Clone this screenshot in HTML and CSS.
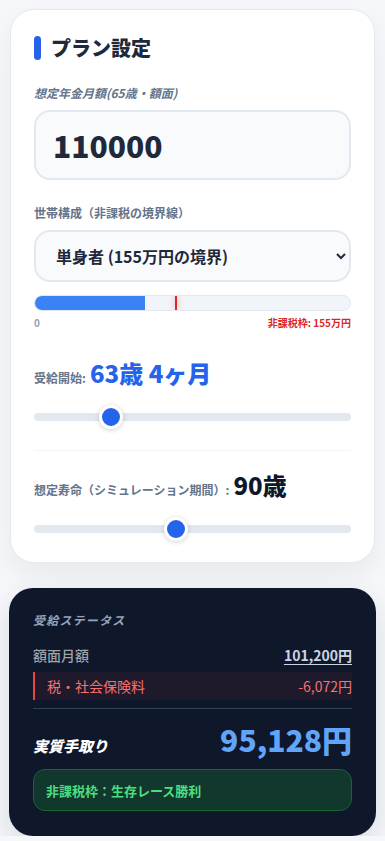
FILE: index.html
```html
<!DOCTYPE html>
<html lang="ja">
<head>
<meta charset="utf-8">
<meta name="viewport" content="width=device-width, initial-scale=1">
<title>プラン設定</title>
<link rel="stylesheet" href="styles.css">
</head>
<body>
<main class="page">
  <section class="card">
    <h2 class="card-title"><span class="title-bar"></span>プラン設定</h2>

    <label class="field-label italic" for="amount">想定年金月額(65歳・額面)</label>
    <input id="amount" class="amount-input" type="text" value="110000">

    <label class="field-label label-select" for="household">世帯構成（非課税の境界線）</label>
    <select id="household" class="household-select">
      <option>単身者 (155万円の境界)</option>
    </select>

    <div class="meter">
      <div class="meter-fill" style="width:35%"></div>
      <div class="meter-mark" style="left:44.5%"></div>
    </div>
    <div class="meter-scale">
      <span class="scale-min">0</span>
      <span class="scale-max">非課税枠: 155万円</span>
    </div>

    <div class="slider-block first">
      <div class="slider-head">
        <span class="head-label">受給開始:</span>
        <span class="head-value blue">63歳 4ヶ月</span>
      </div>
      <input class="range" type="range" min="720" max="900" value="760">
    </div>

    <div class="slider-block second">
      <div class="slider-head">
        <span class="head-label">想定寿命（シミュレーション期間）:</span>
        <span class="head-value dark">90歳</span>
      </div>
      <input class="range" type="range" min="70" max="115" value="90">
    </div>
  </section>

  <section class="status">
    <div class="status-title">受給ステータス</div>
    <div class="status-row">
      <span class="row-label">額面月額</span>
      <span class="row-value gross">101,200円</span>
    </div>
    <div class="status-row deduct">
      <span>税・社会保険料</span>
      <span>-6,072円</span>
    </div>
    <div class="net">
      <span class="net-label">実質手取り</span>
      <span class="net-value">95,128円</span>
    </div>
    <div class="badge">非課税枠：生存レース勝利</div>
  </section>
</main>
</body>
</html>
```
FILE: styles.css
```css
* { box-sizing: border-box; }
html, body { margin: 0; padding: 0; }
body {
  background: #f5f7fa;
  font-family: "Noto Sans CJK JP", "Noto Sans", sans-serif;
  color: #1e293b;
}
.page {
  padding: 9px 9px 0;
  display: flex;
  flex-direction: column;
}
.card {
  margin: 0 1px;
  background: #ffffff;
  border: 1px solid #e5e9f0;
  border-radius: 24px;
  padding: 24px 23px 21px;
  box-shadow: 0 12px 30px rgba(15, 23, 42, 0.06);
  display: flex;
  flex-direction: column;
}
.card-title {
  margin: 0 0 23px;
  display: flex;
  align-items: center;
  gap: 10px;
  font-size: 20px;
  line-height: 28px;
  font-weight: 900;
  color: #1e293b;
}
.title-bar {
  width: 7px;
  height: 24px;
  border-radius: 4px;
  background: #2563eb;
}
.field-label {
  display: block;
  font-size: 12px;
  line-height: 16px;
  font-weight: 700;
  color: #64748b;
  margin-bottom: 9px;
}
.italic { font-style: italic; }
.label-select { margin-top: 25px; }
.amount-input {
  width: 100%;
  height: 70px;
  border: 2px solid #e2e8f0;
  border-radius: 16px;
  background: #f8fafc;
  padding: 0 17px;
  font-family: inherit;
  font-size: 30px;
  font-weight: 900;
  color: #1e293b;
  outline: none;
}
.household-select {
  width: 100%;
  height: 52px;
  border: 2px solid #e2e8f0;
  border-radius: 16px;
  background-color: #f8fafc;
  padding: 0 8px 0 16px;
  font-family: inherit;
  font-size: 16px;
  font-weight: 700;
  color: #1e293b;
  outline: none;
}
.meter {
  position: relative;
  margin-top: 13px;
  height: 16px;
  border: 1px solid #e2e8f0;
  border-radius: 8px;
  background: #f1f5f9;
  overflow: hidden;
}
.meter-fill {
  height: 100%;
  background: #3b82f6;
}
.meter-mark {
  position: absolute;
  top: 0;
  bottom: 0;
  width: 2px;
  background: #dc2626;
  box-shadow: 0 0 6px rgba(239, 68, 68, 0.55);
}
.meter-scale {
  margin-top: 5px;
  display: flex;
  justify-content: space-between;
  font-size: 10px;
  line-height: 14px;
  font-weight: 700;
}
.scale-min { color: #94a3b8; }
.scale-max { color: #dc2626; }

.slider-block { display: flex; flex-direction: column; }
.slider-block.first { margin-top: 27px; padding-bottom: 21px; }
.slider-block.second { border-top: 1px solid #f1f5f9; padding-top: 18px; }
.slider-head {
  display: flex;
  align-items: baseline;
  gap: 4px;
  height: 32px;
}
.head-label {
  font-size: 12px;
  font-weight: 700;
  color: #64748b;
}
.head-value {
  font-size: 24px;
  line-height: 32px;
  font-weight: 900;
}
.head-value.blue { color: #2563eb; }
.head-value.dark { color: #0f172a; }

.range {
  -webkit-appearance: none;
  appearance: none;
  width: 100%;
  height: 24px;
  margin: 16px 0 0;
  background: transparent;
}
.range::-webkit-slider-runnable-track {
  height: 8px;
  border-radius: 4px;
  background: #e2e8f0;
}
.range::-webkit-slider-thumb {
  -webkit-appearance: none;
  width: 24px;
  height: 24px;
  margin-top: -8px;
  border-radius: 50%;
  background: #2563eb;
  border: 3px solid #ffffff;
  box-shadow: 0 1px 5px rgba(15, 23, 42, 0.2);
}

.status {
  margin-top: 25px;
  background: #0f172a;
  border-radius: 24px;
  padding: 24px 24px 25px;
  box-shadow: 0 12px 30px rgba(15, 23, 42, 0.12);
  display: flex;
  flex-direction: column;
}
.status-title {
  font-size: 12px;
  line-height: 16px;
  font-weight: 700;
  font-style: italic;
  letter-spacing: 0.1em;
  color: #94a3b8;
  margin-bottom: 17px;
}
.status-row {
  display: flex;
  justify-content: space-between;
  align-items: center;
  font-size: 14px;
  line-height: 20px;
}
.row-label { color: #9ca3af; font-weight: 500; }
.row-value.gross {
  color: #cbd5e1;
  font-weight: 700;
  text-decoration: underline;
  text-underline-offset: 3px;
}
.status-row.deduct {
  margin-top: 7px;
  padding: 4px 0 4px 12px;
  border-left: 2px solid #ef4444;
  background: rgba(239, 68, 68, 0.07);
  color: #f87171;
}
.net {
  margin-top: 8px;
  border-top: 1px solid #334155;
  padding-top: 12px;
  display: flex;
  justify-content: space-between;
  align-items: baseline;
}
.net-label {
  font-size: 15px;
  font-weight: 900;
  font-style: italic;
  color: #ffffff;
}
.net-value {
  font-size: 30px;
  line-height: 36px;
  font-weight: 900;
  color: #60a5fa;
}
.badge {
  margin-top: 12px;
  height: 42px;
  display: flex;
  align-items: center;
  padding: 0 12px;
  border: 1px solid #166534;
  border-radius: 12px;
  background: #12372d;
  color: #4ade80;
  font-size: 13px;
  font-weight: 700;
}
```
